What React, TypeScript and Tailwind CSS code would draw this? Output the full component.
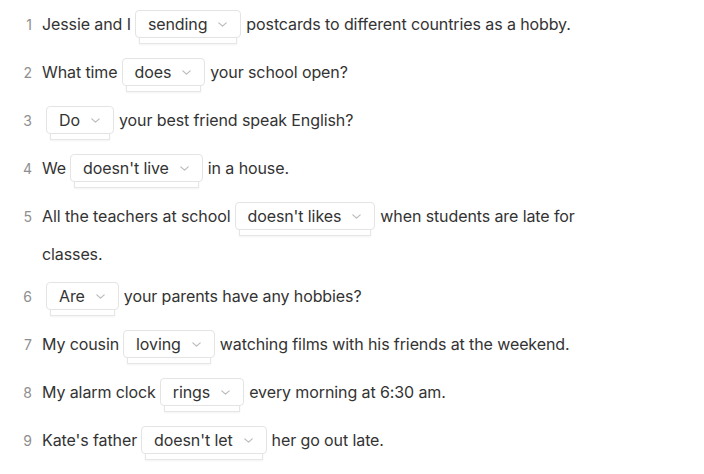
import React from "react";

type Part = string | { sel: string };

interface Item {
  id: number;
  parts: Part[];
}

const items: Item[] = [
  { id: 1, parts: ["Jessie and I", { sel: "sending" }, "postcards to different countries as a hobby."] },
  { id: 2, parts: ["What time", { sel: "does" }, "your school open?"] },
  { id: 3, parts: [{ sel: "Do" }, "your best friend speak English?"] },
  { id: 4, parts: ["We", { sel: "doesn't live" }, "in a house."] },
  { id: 5, parts: ["All the teachers at school", { sel: "doesn't likes" }, "when students are late for classes."] },
  { id: 6, parts: [{ sel: "Are" }, "your parents have any hobbies?"] },
  { id: 7, parts: ["My cousin", { sel: "loving" }, "watching films with his friends at the weekend."] },
  { id: 8, parts: ["My alarm clock", { sel: "rings" }, "every morning at 6:30 am."] },
  { id: 9, parts: ["Kate's father", { sel: "doesn't let" }, "her go out late."] },
];

const Chevron = () => (
  <svg width="9" height="5" viewBox="0 0 9 5" fill="none" className="shrink-0 self-center">
    <path d="M0.8 0.8l3.7 3.4 3.7-3.4" stroke="#b8b8b8" strokeWidth="1.1" strokeLinecap="round" strokeLinejoin="round" />
  </svg>
);

const Select = ({ value }: { value: string }) => (
  <span className="inline-flex items-center h-[28px] mt-[8px] mb-[8px] ml-[4px] mr-[5px] align-baseline pl-3 pr-[13px] gap-[11px] bg-white border border-[#e4e4e4] rounded-[4px] leading-none text-[#333] shadow-[0_10px_0_-5px_#ffffff,0_10px_0_-4px_#e6e6e6,0_11px_2px_-4px_rgba(0,0,0,0.05)]">
    {value}
    <Chevron />
  </span>
);

export default function App() {
  return (
    <div
      className="w-[704px] h-[474px] bg-white pt-[2px] overflow-hidden"
      style={{ fontFamily: "Inter, 'Noto Sans', sans-serif" }}
    >
      <div className="flex flex-col gap-[4px]">
        {items.map((item) => (
          <div key={item.id} className="flex items-baseline">
            <div className="w-[42px] shrink-0 text-right pr-[10px] text-[14px] text-[#8f8f8f]">
              {item.id}
            </div>
            <p className="w-[580px] text-[16px] leading-[32px] tracking-[-0.1px] text-[#333]">
              {item.parts.map((p, i) =>
                typeof p === "string" ? (
                  <React.Fragment key={i}>{p}</React.Fragment>
                ) : (
                  <Select key={i} value={p.sel} />
                )
              )}
            </p>
          </div>
        ))}
      </div>
    </div>
  );
}
